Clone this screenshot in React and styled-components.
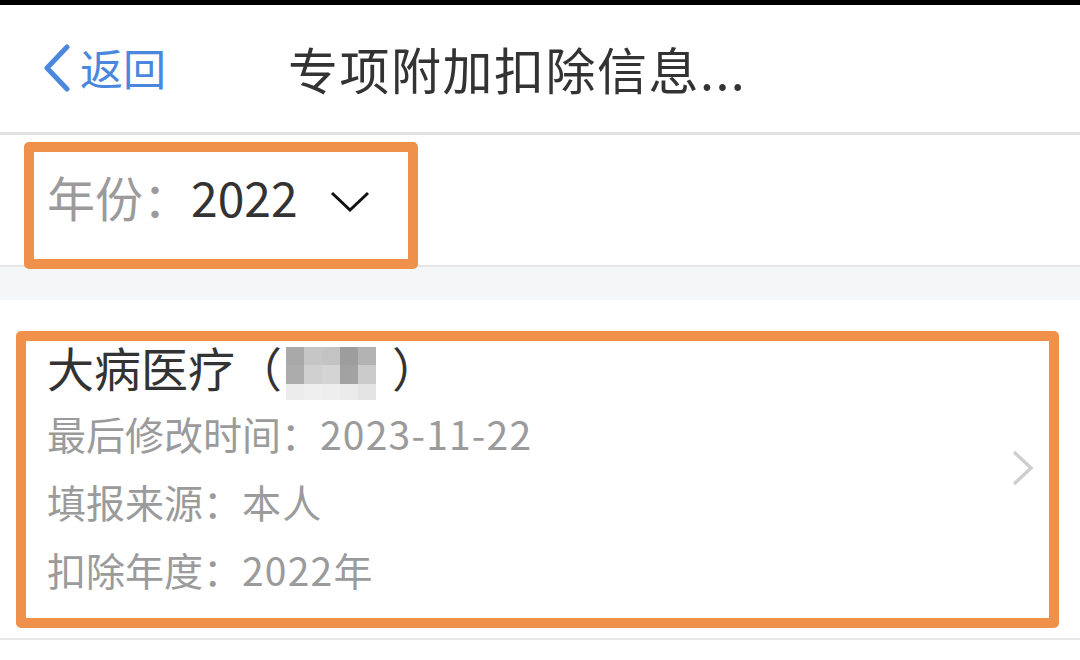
import React from 'react';
import styled, { createGlobalStyle } from 'styled-components';

const GlobalStyle = createGlobalStyle`
    html, body {
        margin: 0;
        padding: 0;
        background: #ffffff;
    }
    body {
        font-family: "Noto Sans CJK SC", "Noto Sans", sans-serif;
    }
`;

const colors = {
    blue: '#4a87dd',
    text: '#333333',
    grey: '#9b9b9b',
    line: '#e6e6e8',
    band: '#f5f6f8',
    orange: '#f0914b',
};

const mosaic = [
    ['#a9a9a9', '#c6c6c6', '#c3c3c3', '#9d9d9d', '#b3b3b3'],
    ['#acacac', '#d0d0d0', '#d4d4d4', '#a2a2a2', '#cbcbcb'],
    ['#ececec', '#efefef', '#eeeeee', '#ebebeb', '#e4e4e4'],
];

const rows = [
    { label: '最后修改时间：', value: '2023-11-22' },
    { label: '填报来源：', value: '本人' },
    { label: '扣除年度：', value: '2022年' },
];

export default function App(){
    return(
        <Page>
            <GlobalStyle />
            <StatusBar />
            <NavBar>
                <BackButton>
                    <svg width="28" height="48" viewBox="0 0 28 48">
                        <polyline points="24,3 4,24 24,45" fill="none" stroke={colors.blue} strokeWidth="5" strokeLinecap="round" strokeLinejoin="round" />
                    </svg>
                    <span>返回</span>
                </BackButton>
                <NavTitle>专项附加扣除信息...</NavTitle>
            </NavBar>

            <YearSection>
                <Highlight width="394px" height="127px">
                    <YearPicker>
                        <YearLabel>年份：</YearLabel>
                        <YearValue>2022</YearValue>
                        <svg width="40" height="22" viewBox="0 0 40 22">
                            <polyline points="2,3 20,20 38,3" fill="none" stroke="#111" strokeWidth="3" />
                        </svg>
                    </YearPicker>
                </Highlight>
            </YearSection>

            <Band />

            <Card>
                <Highlight height="297px">
                    <CardBody>
                        <Info>
                            <CardTitle>
                                大病医疗（
                                <Mosaic>
                                    {mosaic.flat().map((c, i) => <i key={i} style={{background: c}} />)}
                                </Mosaic>
                                <Paren>）</Paren>
                            </CardTitle>
                            {rows.map((r) => (
                                <InfoRow key={r.label}>
                                    {r.label}
                                    <InfoValue>{r.value}</InfoValue>
                                </InfoRow>
                            ))}
                        </Info>
                        <Arrow width="24" height="36" viewBox="0 0 24 36">
                            <polyline points="3,2 20,18 3,34" fill="none" stroke="#cfcfcf" strokeWidth="3.5" />
                        </Arrow>
                    </CardBody>
                </Highlight>
            </Card>
        </Page>
    );
}

const Page = styled.div`
    width: 1080px;
    height: 660px;
    overflow: hidden;
    background: #ffffff;
`;

const StatusBar = styled.div`
    height: 5px;
    background: #000000;
`;

const NavBar = styled.div`
    height: 130px;
    box-sizing: border-box;
    border-bottom: 3px solid #e3e3e5;
    display: flex;
    align-items: center;
    padding: 0 0 2px 43px;
`;

const BackButton = styled.div`
    display: flex;
    align-items: center;
    gap: 9px;
    color: ${colors.blue};
    font-size: 43px;
    line-height: 1;
`;

const NavTitle = styled.div`
    margin-left: 122px;
    font-size: 50px;
    line-height: 1;
    color: ${colors.text};
    letter-spacing: 1.5px;
`;

const YearSection = styled.div`
    height: 132px;
    box-sizing: border-box;
    padding: 7px 0 0 24px;
    border-bottom: 2px solid ${colors.line};
    background: #ffffff;
`;

const Highlight = styled.div`
    position: relative;
    z-index: 1;
    box-sizing: border-box;
    width: ${(p) => p.width || 'auto'};
    height: ${(p) => p.height};
    border: 10px solid ${colors.orange};
    border-radius: 5px;
    background: #ffffff;
`;

const YearPicker = styled.div`
    display: flex;
    align-items: center;
    padding: 14px 0 0 13px;
    height: 60px;
    svg {
        margin: 10px 0 0 32px;
    }
`;

const YearLabel = styled.span`
    font-size: 48px;
    color: ${colors.grey};
`;

const YearValue = styled.span`
    font-size: 48px;
    color: ${colors.text};
`;

const Band = styled.div`
    height: 33px;
    background: ${colors.band};
`;

const Card = styled.div`
    padding: 31px 21px 10px 16px;
    background: #ffffff;
    border-bottom: 2px solid #e8e8ea;
`;

const CardBody = styled.div`
    display: flex;
    justify-content: space-between;
    padding-left: 21px;
`;

const Info = styled.div`
    display: flex;
    flex-direction: column;
`;

const CardTitle = styled.div`
    display: flex;
    align-items: center;
    height: 51px;
    font-size: 47px;
    color: ${colors.text};
    margin-bottom: 7px;
`;

const Mosaic = styled.span`
    display: grid;
    grid-template-columns: repeat(5, 18px);
    grid-template-rows: 18px 19px 16px;
    margin: 14px 0 0 4px;
    filter: blur(0.6px);
    i {
        display: block;
    }
`;

const Paren = styled.span`
    margin-left: 16px;
`;

const InfoRow = styled.div`
    height: 68px;
    line-height: 68px;
    font-size: 39px;
    color: ${colors.grey};
`;

const InfoValue = styled.span`
    letter-spacing: 1.2px;
`;

const Arrow = styled.svg`
    align-self: center;
    margin: 0 14px 8px 0;
`;
